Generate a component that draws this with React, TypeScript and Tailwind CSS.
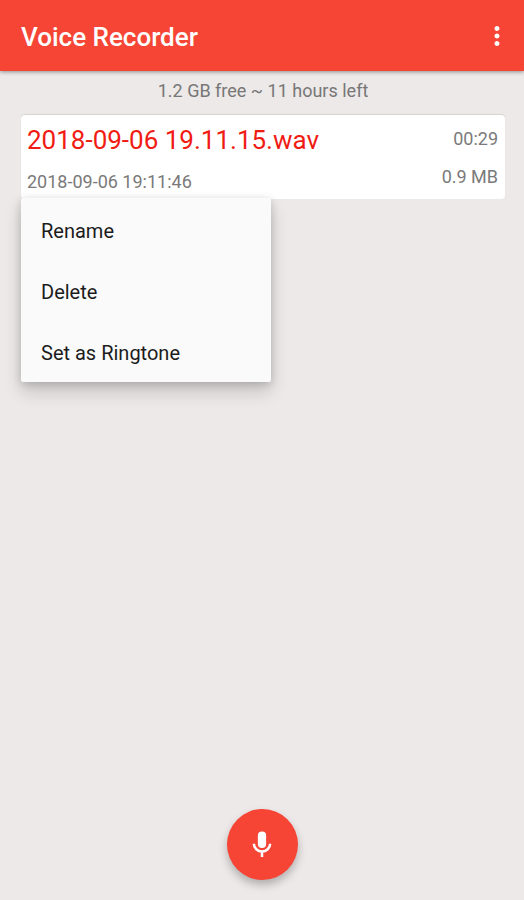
import { MdMoreVert } from 'react-icons/md';

type Recording = {
  name: string;
  date: string;
  duration: string;
  size: string;
};

const recordings: Recording[] = [
  {
    name: '2018-09-06 19.11.15.wav',
    date: '2018-09-06 19:11:46',
    duration: '00:29',
    size: '0.9 MB',
  },
];

const menuItems = ['Rename', 'Delete', 'Set as Ringtone'];

const MicIcon = ({ className }: { className?: string }) => (
  <svg viewBox="0 0 24 24" className={className} aria-hidden="true">
    <rect x="8.9" y="1.9" width="6.2" height="12.3" rx="3" fill="currentColor" />
    <path
      d="M5.900 11c0 3.300 2.800 5.900 6.100 5.900s6.100-2.600 6.100-5.900M12 16.900V21"
      fill="none"
      stroke="currentColor"
      strokeWidth="1.900"
    />
  </svg>
);

const Header = () => (
  <header className="relative flex h-[71px] items-center justify-between bg-[#f64435] pl-[21px] pr-3 text-white shadow-[0_1px_4px_rgba(0,0,0,0.4)]">
    <h1 className="pt-0.5 text-[26px] font-medium leading-8">Voice Recorder</h1>
    <button type="button" aria-label="More options">
      <MdMoreVert className="size-[30px]" />
    </button>
  </header>
);

const ContextMenu = () => (
  <div
    role="menu"
    className="absolute left-0 top-full z-10 -mt-px w-[250px] rounded-xs bg-[#fafafa] pb-px shadow-[0_10px_18px_rgba(0,0,0,0.16),0_2px_9px_rgba(0,0,0,0.16)]"
  >
    {menuItems.map((item) => (
      <button
        key={item}
        type="button"
        role="menuitem"
        className="block h-[61px] w-full px-5 pb-1 pt-2 text-left text-xl leading-6 text-[#1c1c1c]"
      >
        {item}
      </button>
    ))}
  </div>
);

const RecordingCard = ({ recording }: { recording: Recording }) => (
  <li className="relative">
    <div className="flex h-[84px] justify-between rounded bg-white pl-1.5 pr-[7px] shadow-[0_-1px_1px_rgba(0,0,0,0.1)]">
      <div className="pt-[9px]">
        <h2 className="text-[26px] leading-8 text-[#f01c14]">{recording.name}</h2>
        <p className="mt-[14px] text-lg leading-6 text-[#7a7a7a]">{recording.date}</p>
      </div>
      <div className="pt-3 text-right text-lg leading-6 text-[#7a7a7a]">
        <p>{recording.duration}</p>
        <p className="mt-[14px]">{recording.size}</p>
      </div>
    </div>
    <ContextMenu />
  </li>
);

const App = () => (
  <div className="flex min-h-screen flex-col bg-[#ece9e8] font-['Roboto',sans-serif]">
    <Header />
    <main className="flex-1 pl-[21px] pr-[19px]">
      <p className="pb-3 pt-2 text-center text-lg leading-6 text-[#777]">
        1.2 GB free ~ 11 hours left
      </p>
      <ul>
        {recordings.map((recording) => (
          <RecordingCard key={recording.name} recording={recording} />
        ))}
      </ul>
    </main>
    <footer className="flex justify-center pb-5">
      <button
        type="button"
        aria-label="Record"
        className="flex size-[71px] items-center justify-center rounded-full bg-[#f64435] text-white shadow-[0_5px_9px_rgba(0,0,0,0.25)]"
      >
        <MicIcon className="size-8" />
      </button>
    </footer>
  </div>
);

export default App;
